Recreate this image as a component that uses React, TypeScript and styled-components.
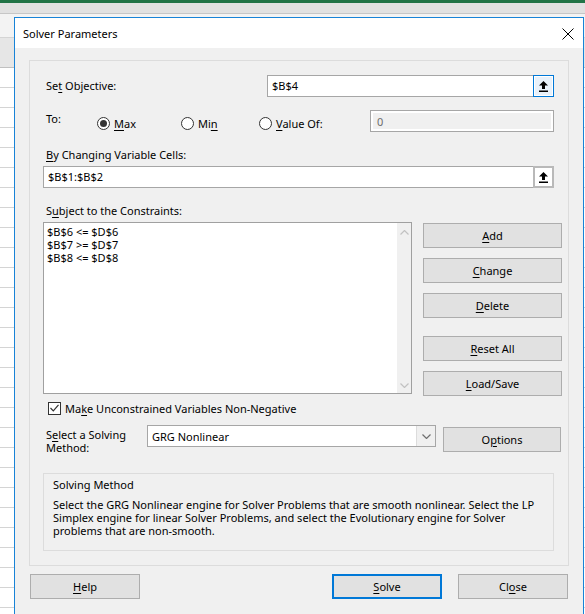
import React from 'react';
import styled, { createGlobalStyle } from 'styled-components';

const GlobalStyle = createGlobalStyle`
  html, body {
    margin: 0;
    padding: 0;
  }
  body {
    width: 585px;
    height: 614px;
    overflow: hidden;
    font-family: 'Noto Sans', 'Liberation Sans', sans-serif;
    font-size: 11px;
    color: #000;
  }
`

const Desktop = styled.div`
  position: relative;
  width: 585px;
  height: 614px;
  overflow: hidden;
  background: #fff;
`

const ExcelTitle = styled.div`
  height: 3px;
  background: #217346;
`

const Ribbon = styled.div`
  height: 10px;
  background: #e1e1e1;
  border-bottom: 1px solid #c6c6c6;
`

const FormulaBar = styled.div`
  height: 23px;
  background: #f3f3f3;
  border-bottom: 1px solid #d4d4d4;
`

const ColumnHeader = styled.div`
  height: 29px;
  background: #e6e6e6;
  border-bottom: 1px solid #c0c0c0;
`

const Sheet = styled.div`
  height: 546px;
  background: repeating-linear-gradient(to bottom, #fff 0 19px, #d4d4d4 19px 20px);
`

const Dialog = styled.div`
  position: absolute;
  left: 14px;
  top: 17px;
  width: 570px;
  height: 620px;
  box-sizing: border-box;
  border: 1px solid #1883d7;
  background: #f0f0f0;
  display: flex;
  flex-direction: column;
`

const TitleBar = styled.div`
  height: 30px;
  background: #fff;
  display: flex;
  align-items: center;
  justify-content: space-between;
  padding: 1px 8px 0 8px;
  box-sizing: border-box;
`

const Title = styled.span`
  font-size: 11px;
  line-height: 16px;
`

const CloseIcon = styled.svg`
  width: 12px;
  height: 12px;
  margin-right: 1px;
`

const Body = styled.div`
  padding: 12px 14px 0 14px;
  display: flex;
  flex-direction: column;
`

const Panel = styled.div`
  height: 506px;
  box-sizing: border-box;
  border: 1px solid #dcdcdc;
  padding: 14px 6px 0 13px;
  display: flex;
  flex-direction: column;
`

const Row = styled.div<{ $top?: number; $height?: number }>`
  display: flex;
  align-items: center;
  margin-top: ${p => p.$top ?? 0}px;
  height: ${p => p.$height ?? 22}px;
  flex-shrink: 0;
`

const Label = styled.div<{ $width?: number; $lift?: number }>`
  width: ${p => (p.$width ? `${p.$width}px` : 'auto')};
  flex-shrink: 0;
  box-sizing: border-box;
  padding-left: 3px;
  line-height: 16px;
  position: relative;
  top: ${p => -(p.$lift ?? 0)}px;
`

const SectionLabel = styled.div<{ $top: number }>`
  margin-top: ${p => p.$top}px;
  padding-left: 3px;
  line-height: 16px;
  height: 16px;
  flex-shrink: 0;
`

const Key = styled.span`
  text-decoration: underline;
  text-decoration-thickness: 1px;
  text-underline-offset: 2px;
`

const RefField = styled.div<{ $width: number }>`
  width: ${p => p.$width}px;
  height: 22px;
  box-sizing: border-box;
  border: 1px solid #a6a6a6;
  background: #fff;
  display: flex;
  align-items: center;
  flex-shrink: 0;
`

const FieldText = styled.span`
  flex: 1;
  padding-left: 4px;
  line-height: 16px;
`

const RefButton = styled.div<{ $focused?: boolean }>`
  width: 21px;
  height: 22px;
  margin: -1px -1px -1px 0;
  box-sizing: border-box;
  display: flex;
  align-items: center;
  justify-content: center;
  border: ${p => (p.$focused ? '1px solid #0078d7' : '2px solid #b9b9b9')};
  box-shadow: ${p => (p.$focused ? 'inset 0 0 0 1px #fff' : 'none')};
  background: ${p => (p.$focused ? '#e8f1fa' : '#fff')};
`

const RadioOption = styled.div<{ $width: number }>`
  width: ${p => p.$width}px;
  flex-shrink: 0;
  display: flex;
  align-items: center;
  gap: 4px;
  position: relative;
  top: 2px;
`

const RadioCircle = styled.span<{ $checked?: boolean }>`
  width: 13px;
  height: 13px;
  box-sizing: border-box;
  border: 1px solid #333;
  border-radius: 50%;
  background: #fff;
  display: flex;
  align-items: center;
  justify-content: center;
  &::after {
    content: '';
    display: ${p => (p.$checked ? 'block' : 'none')};
    width: 7px;
    height: 7px;
    border-radius: 50%;
    background: #333;
  }
`

const DisabledField = styled.div`
  width: 184px;
  height: 22px;
  box-sizing: border-box;
  border: 1px solid #a6a6a6;
  box-shadow: inset 0 0 0 2px #fff;
  background: #f0f0f0;
  color: #6d6d6d;
  padding-left: 6px;
  display: flex;
  align-items: center;
`

const ConstraintArea = styled.div`
  margin-top: 3px;
  height: 172px;
  flex-shrink: 0;
  display: flex;
  align-items: flex-start;
`

const ConstraintList = styled.div`
  width: 369px;
  height: 172px;
  box-sizing: border-box;
  border: 1px solid #a0a0a0;
  background: #fff;
  display: flex;
`

const ListItems = styled.div`
  flex: 1;
  padding: 2px 3px;
  line-height: 13px;
`

const ScrollBar = styled.div`
  width: 14px;
  background: #f0f0f0;
  display: flex;
  flex-direction: column;
  justify-content: space-between;
  align-items: center;
  padding: 7px 0 5px;
`

const ButtonColumn = styled.div`
  margin-left: auto;
  margin-top: 1px;
  width: 139px;
  display: flex;
  flex-direction: column;
`

const Button = styled.div<{ $width?: number; $gap?: number; $default?: boolean }>`
  width: ${p => (p.$width ? `${p.$width}px` : '100%')};
  height: 25px;
  margin-top: ${p => p.$gap ?? 0}px;
  box-sizing: border-box;
  flex-shrink: 0;
  border: ${p => (p.$default ? '2px solid #0078d7' : '1px solid #adadad')};
  background: #e1e1e1;
  display: flex;
  align-items: center;
  justify-content: center;
  line-height: 16px;
`

const CheckRow = styled.div`
  margin-top: 7px;
  height: 14px;
  flex-shrink: 0;
  padding-left: 5px;
  display: flex;
  align-items: center;
  gap: 4px;
`

const CheckBox = styled.span`
  width: 13px;
  height: 13px;
  box-sizing: border-box;
  border: 1px solid #333;
  background: #fff;
  display: flex;
  align-items: center;
  justify-content: center;
`

const MethodRow = styled.div`
  margin-top: 10px;
  height: 30px;
  flex-shrink: 0;
  display: flex;
  align-items: flex-start;
`

const MethodLabel = styled.div`
  width: 104px;
  flex-shrink: 0;
  box-sizing: border-box;
  padding: 3px 0 0 3px;
  line-height: 13px;
`

const Select = styled.div`
  width: 289px;
  height: 22px;
  box-sizing: border-box;
  border: 1px solid #a6a6a6;
  background: #fff;
  display: flex;
  align-items: stretch;
`

const SelectValue = styled.span`
  flex: 1;
  padding-left: 4px;
  display: flex;
  align-items: center;
`

const SelectArrow = styled.span`
  width: 18px;
  background: #f0f0f0;
  border-left: 1px solid #dcdcdc;
  display: flex;
  align-items: center;
  justify-content: center;
`

const OptionsButton = styled(Button)`
  margin-left: 7px;
  margin-top: 2px;
`

const InfoBox = styled.div`
  margin-top: 18px;
  width: 511px;
  height: 78px;
  flex-shrink: 0;
  box-sizing: border-box;
  border: 1px solid #dcdcdc;
  padding: 3px 12px 0 9px;
`

const InfoTitle = styled.div`
  line-height: 15px;
`

const InfoText = styled.p`
  margin: 6px 0 0;
  line-height: 13px;
`

const ButtonBar = styled.div`
  margin-top: 8px;
  padding: 0 1px;
  display: flex;
`

const Spacer = styled.div`
  flex: 1;
`

const CloseButton = styled(Button)`
  margin-left: 16px;
`

function RefArrow() {
  return (
    <svg width="9" height="11" viewBox="0 0 9 11">
      <path d="M4.5 0 L9 4.5 H6 V8 H3 V4.5 H0 Z" fill="#000" />
      <rect x="0" y="9.5" width="9" height="1.5" fill="#000" />
    </svg>
  );
}

function Chevron({ up, color }: { up?: boolean; color: string }) {
  return (
    <svg width="9" height="5" viewBox="0 0 9 5">
      <path
        d={up ? 'M0.5 4.5 L4.5 0.5 L8.5 4.5' : 'M0.5 0.5 L4.5 4.5 L8.5 0.5'}
        fill="none"
        stroke={color}
        strokeWidth="1.2"
      />
    </svg>
  );
}

const constraints = ['$B$6 <= $D$6', '$B$7 >= $D$7', '$B$8 <= $D$8'];

export default function App() {
  return (
    <Desktop>
      <GlobalStyle />
      <ExcelTitle />
      <Ribbon />
      <FormulaBar />
      <ColumnHeader />
      <Sheet />

      <Dialog>
        <TitleBar>
          <Title>Solver Parameters</Title>
          <CloseIcon viewBox="0 0 12 12">
            <path d="M0.5 0.5 L11.5 11.5 M11.5 0.5 L0.5 11.5" stroke="#000" strokeWidth="1" />
          </CloseIcon>
        </TitleBar>

        <Body>
          <Panel>
            <Row>
              <Label $width={224}>Se<Key>t</Key> Objective:</Label>
              <RefField $width={287}>
                <FieldText>$B$4</FieldText>
                <RefButton $focused><RefArrow /></RefButton>
              </RefField>
            </Row>

            <Row $top={13}>
              <Label $width={54} $lift={2}>To:</Label>
              <RadioOption $width={84}>
                <RadioCircle $checked />
                <span><Key>M</Key>ax</span>
              </RadioOption>
              <RadioOption $width={78}>
                <RadioCircle />
                <span>Mi<Key>n</Key></span>
              </RadioOption>
              <RadioOption $width={111}>
                <RadioCircle />
                <span><Key>V</Key>alue Of:</span>
              </RadioOption>
              <DisabledField>0</DisabledField>
            </Row>

            <SectionLabel $top={15}><Key>B</Key>y Changing Variable Cells:</SectionLabel>
            <Row $top={3}>
              <RefField $width={511}>
                <FieldText>$B$1:$B$2</FieldText>
                <RefButton><RefArrow /></RefButton>
              </RefField>
            </Row>

            <SectionLabel $top={15}>S<Key>u</Key>bject to the Constraints:</SectionLabel>
            <ConstraintArea>
              <ConstraintList>
                <ListItems>
                  {constraints.map(c => (
                    <div key={c}>{c}</div>
                  ))}
                </ListItems>
                <ScrollBar>
                  <Chevron up color="#c2c2c2" />
                  <Chevron color="#c2c2c2" />
                </ScrollBar>
              </ConstraintList>
              <ButtonColumn>
                <Button><Key>A</Key>dd</Button>
                <Button $gap={10}><Key>C</Key>hange</Button>
                <Button $gap={10}><Key>D</Key>elete</Button>
                <Button $gap={18}><Key>R</Key>eset All</Button>
                <Button $gap={10}><Key>L</Key>oad/Save</Button>
              </ButtonColumn>
            </ConstraintArea>

            <CheckRow>
              <CheckBox>
                <svg width="9" height="8" viewBox="0 0 9 8">
                  <path d="M0.5 4 L3.3 6.8 L8.5 0.8" fill="none" stroke="#333" strokeWidth="1.2" />
                </svg>
              </CheckBox>
              <span>Ma<Key>k</Key>e Unconstrained Variables Non-Negative</span>
            </CheckRow>

            <MethodRow>
              <MethodLabel>S<Key>e</Key>lect a Solving<br />Method:</MethodLabel>
              <Select>
                <SelectValue>GRG Nonlinear</SelectValue>
                <SelectArrow><Chevron color="#707070" /></SelectArrow>
              </Select>
              <OptionsButton $width={118}>O<Key>p</Key>tions</OptionsButton>
            </MethodRow>

            <InfoBox>
              <InfoTitle>Solving Method</InfoTitle>
              <InfoText>
                Select the GRG Nonlinear engine for Solver Problems that are smooth nonlinear. Select the LP
                Simplex engine for linear Solver Problems, and select the Evolutionary engine for Solver
                problems that are non-smooth.
              </InfoText>
            </InfoBox>
          </Panel>

          <ButtonBar>
            <Button $width={110}><Key>H</Key>elp</Button>
            <Spacer />
            <Button $width={110} $default><Key>S</Key>olve</Button>
            <CloseButton $width={110}>Cl<Key>o</Key>se</CloseButton>
          </ButtonBar>
        </Body>
      </Dialog>
    </Desktop>
  );
}
